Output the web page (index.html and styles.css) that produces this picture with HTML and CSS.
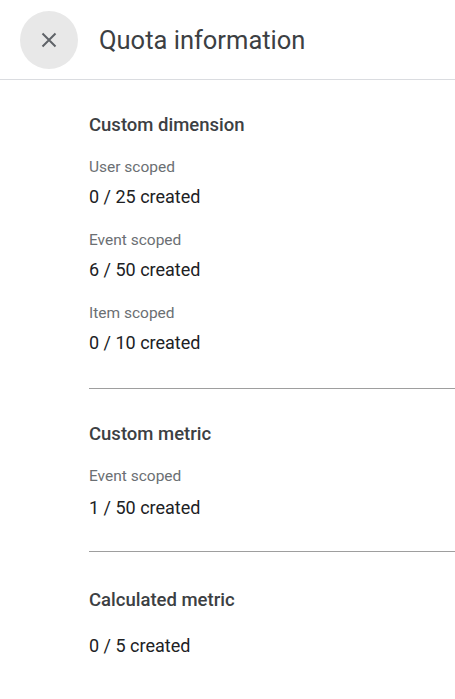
FILE: index.html
```html
<!doctype html>
<html lang="en">
<head>
	<meta charset="UTF-8">
	<title>Quota information</title>
	<link rel="stylesheet" href="styles.css">
</head>
<body>
	<div class="panel">
		<div class="panel-head">
			<button class="close-btn" type="button" aria-label="Close">
				<svg width="16" height="16" viewBox="0 0 16 16"><path d="M1.5 1.5L14.5 14.5M14.5 1.5L1.5 14.5" stroke="#5f6368" stroke-width="2" fill="none"/></svg>
			</button>
			<h1 class="panel-title">Quota information</h1>
		</div>
		<div class="panel-body">
			<div class="section">
				<h2 class="section-title">Custom dimension</h2>
				<div class="quota">
					<div class="quota-label">User scoped</div>
					<div class="quota-value">0 / 25 created</div>
				</div>
				<div class="quota">
					<div class="quota-label">Event scoped</div>
					<div class="quota-value">6 / 50 created</div>
				</div>
				<div class="quota">
					<div class="quota-label">Item scoped</div>
					<div class="quota-value">0 / 10 created</div>
				</div>
			</div>
			<div class="section">
				<h2 class="section-title">Custom metric</h2>
				<div class="quota">
					<div class="quota-label">Event scoped</div>
					<div class="quota-value">1 / 50 created</div>
				</div>
			</div>
			<div class="section">
				<h2 class="section-title">Calculated metric</h2>
				<div class="quota quota-plain">
					<div class="quota-value">0 / 5 created</div>
				</div>
			</div>
		</div>
	</div>
</body>
</html>
```

FILE: styles.css
```css
*{
	margin:0;
	padding:0;
	box-sizing:border-box;
}
body{
	background:#fff;
	font-family:Roboto, "Liberation Sans", sans-serif;
	color:#3c4043;
}
.panel-head{
	display:flex;
	align-items:center;
	height:80px;
	padding-left:20px;
	border-bottom:1px solid #dadce0;
}
.close-btn{
	display:flex;
	align-items:center;
	justify-content:center;
	width:58px;
	height:58px;
	border:none;
	border-radius:50%;
	background:#e8e8e8;
}
.panel-title{
	margin-left:21px;
	font-size:25.5px;
	font-weight:400;
	color:#3c4043;
}
.panel-body{
	padding-left:89px;
}
.section{
	padding:34px 0 32px;
	border-bottom:1px solid #9e9e9e;
}
.section:first-child{
	padding-bottom:34px;
}
.section:last-child{
	padding-top:37px;
	border-bottom:none;
}
.section-title{
	font-size:18.5px;
	font-weight:500;
	line-height:22px;
	color:#3c4043;
}
.quota{
	margin-top:22px;
}
.section-title + .quota{
	margin-top:21px;
}
.quota-plain{
	margin-top:24px !important;
}
.quota-label{
	font-size:15.5px;
	line-height:20px;
	color:#6b6f73;
}
.quota-value{
	margin-top:9px;
	font-size:18px;
	line-height:22px;
	color:#202124;
}
.section:nth-child(2) .quota-value{
	margin-top:11px;
}
```
